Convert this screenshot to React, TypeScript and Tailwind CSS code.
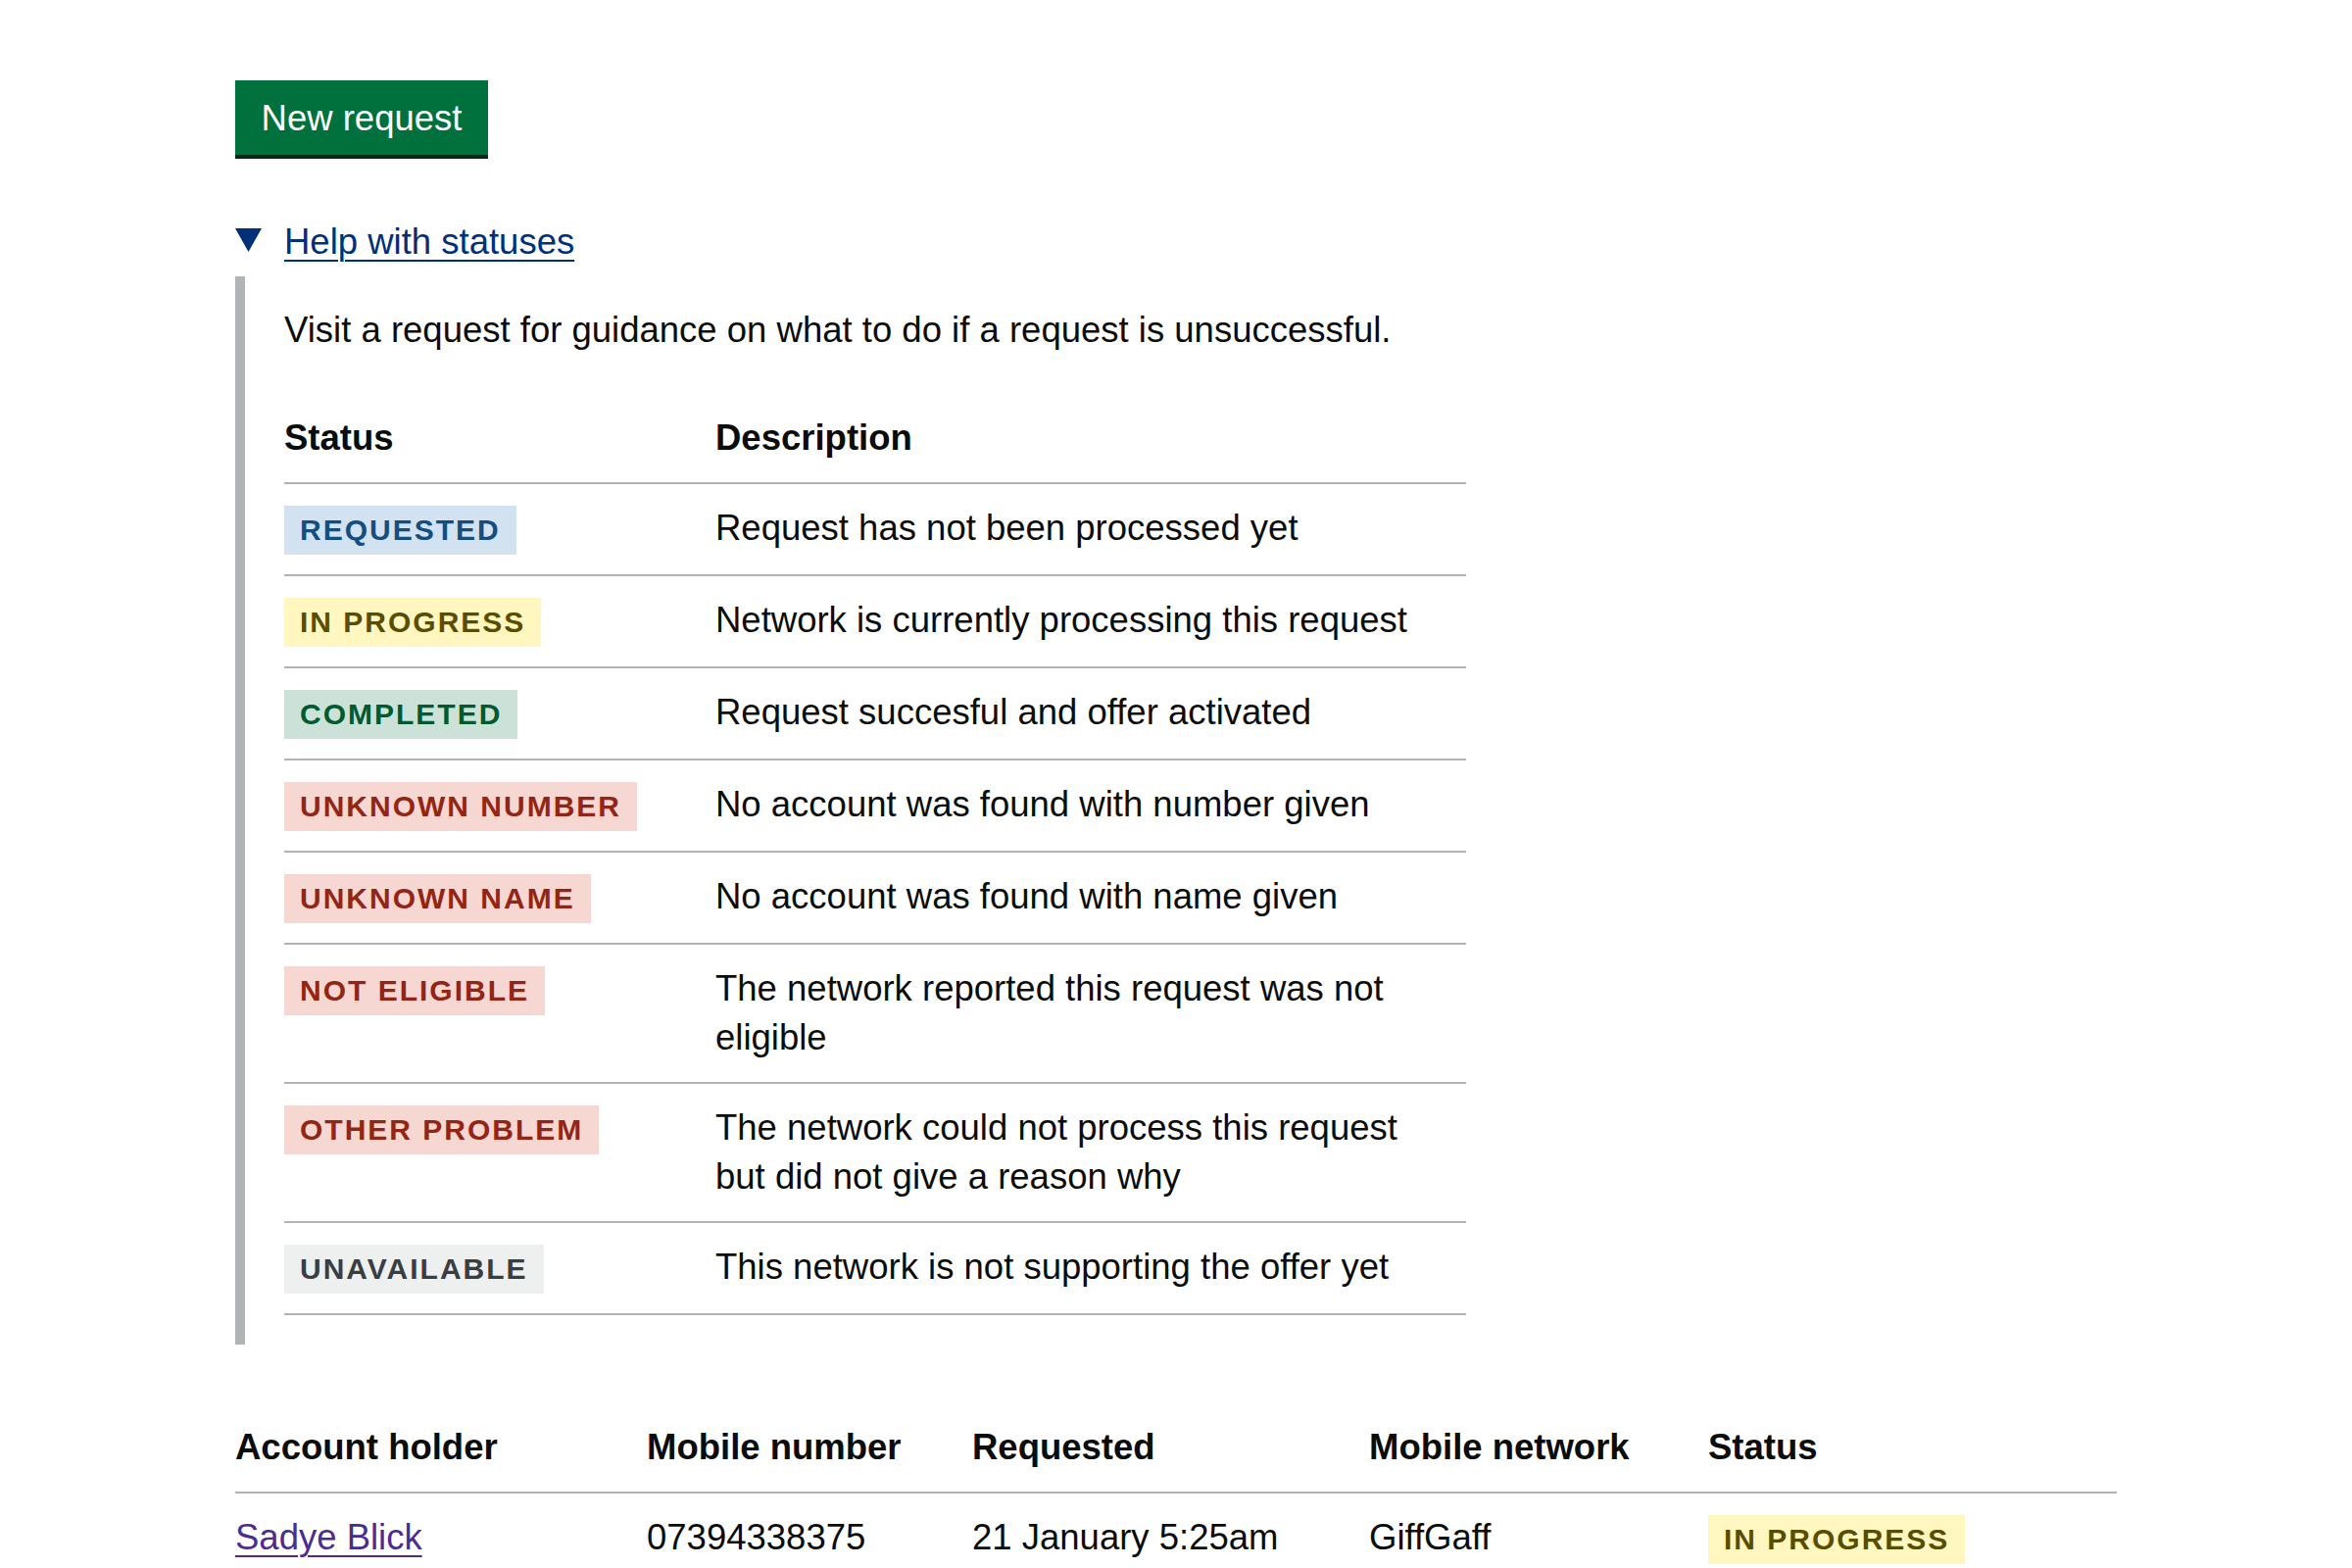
import React from 'react';

const tones = {
  blue: 'bg-[#d2e2f1] text-[#144e81]',
  yellow: 'bg-[#fff7bf] text-[#594d00]',
  green: 'bg-[#cce2d8] text-[#005a30]',
  red: 'bg-[#f6d7d2] text-[#942514]',
  grey: 'bg-[#eeefef] text-[#383f43]',
};

type Tone = keyof typeof tones;

function Tag({ tone, children }: { tone: Tone; children: React.ReactNode }) {
  return (
    <strong className={`inline-block px-[16px] py-[10px] text-[30px] leading-[30px] font-bold uppercase tracking-[2px] ${tones[tone]}`}>
      {children}
    </strong>
  );
}

const statuses: { label: string; tone: Tone; text: React.ReactNode }[] = [
  { label: 'Requested', tone: 'blue', text: 'Request has not been processed yet' },
  { label: 'In progress', tone: 'yellow', text: 'Network is currently processing this request' },
  { label: 'Completed', tone: 'green', text: 'Request succesful and offer activated' },
  { label: 'Unknown number', tone: 'red', text: 'No account was found with number given' },
  { label: 'Unknown name', tone: 'red', text: 'No account was found with name given' },
  { label: 'Not eligible', tone: 'red', text: 'The network reported this request was not eligible' },
  { label: 'Other problem', tone: 'red', text: 'The network could not process this request but did not give a reason why' },
  { label: 'Unavailable', tone: 'grey', text: 'This network is not supporting the offer yet' },
];

const th = 'text-left align-top font-bold py-[20px] pr-[40px] border-b-2 border-[#b1b4b6]';
const td = 'text-left align-top py-[20px] pr-[40px] border-b-2 border-[#b1b4b6]';

export default function App() {
  return (
    <div className="min-h-screen bg-white text-[#0b0c0c] font-['Liberation_Sans',Arial,sans-serif] text-[36.5px] leading-[50px]">
      <div className="w-[1920px] mx-auto pt-[82px]">
        <button className="block w-[258px] h-[76px] pt-[14px] pb-[12px] leading-[50px] bg-[#00703c] text-white text-[36.5px] text-center shadow-[0_4px_0_#002d18] mb-[64px]">
          New request
        </button>

        <details open className="mb-[60px]">
          <summary className="relative block list-none pl-[50px] mb-[10px] cursor-pointer text-[#003078]">
            <svg className="absolute left-0 top-[11px]" width="27" height="24" viewBox="0 0 27 24">
              <polygon points="0,0 27,0 13.5,24" fill="#003078" />
            </svg>
            <span className="underline decoration-[2px] underline-offset-[6px]">Help with statuses</span>
          </summary>
          <div className="border-l-[10px] border-[#b1b4b6] pl-[40px] pt-[30px] pb-[30px]">
            <p className="mb-[40px]">Visit a request for guidance on what to do if a request is unsuccessful.</p>
            <table className="w-[1206px] table-fixed border-collapse">
              <thead>
                <tr>
                  <th className={`${th} w-[440px]`}>Status</th>
                  <th className={th}>Description</th>
                </tr>
              </thead>
              <tbody>
                {statuses.map((s) => (
                  <tr key={s.label}>
                    <td className={td}>
                      <Tag tone={s.tone}>{s.label}</Tag>
                    </td>
                    <td className={td}>{s.text}</td>
                  </tr>
                ))}
              </tbody>
            </table>
          </div>
        </details>

        <table className="w-[1920px] table-fixed border-collapse">
          <thead>
            <tr>
              <th className={`${th} w-[420px]`}>Account holder</th>
              <th className={`${th} w-[332px]`}>Mobile number</th>
              <th className={`${th} w-[405px]`}>Requested</th>
              <th className={`${th} w-[346px]`}>Mobile network</th>
              <th className={th}>Status</th>
            </tr>
          </thead>
          <tbody>
            <tr>
              <td className={td}>
                <a href="#" className="text-[#4c2c92] underline decoration-[2px] underline-offset-[6px]">Sadye Blick</a>
              </td>
              <td className={td}>07394338375</td>
              <td className={td}>21 January 5:25am</td>
              <td className={td}>GiffGaff</td>
              <td className={td}>
                <Tag tone="yellow">In progress</Tag>
              </td>
            </tr>
          </tbody>
        </table>
      </div>
    </div>
  );
}
